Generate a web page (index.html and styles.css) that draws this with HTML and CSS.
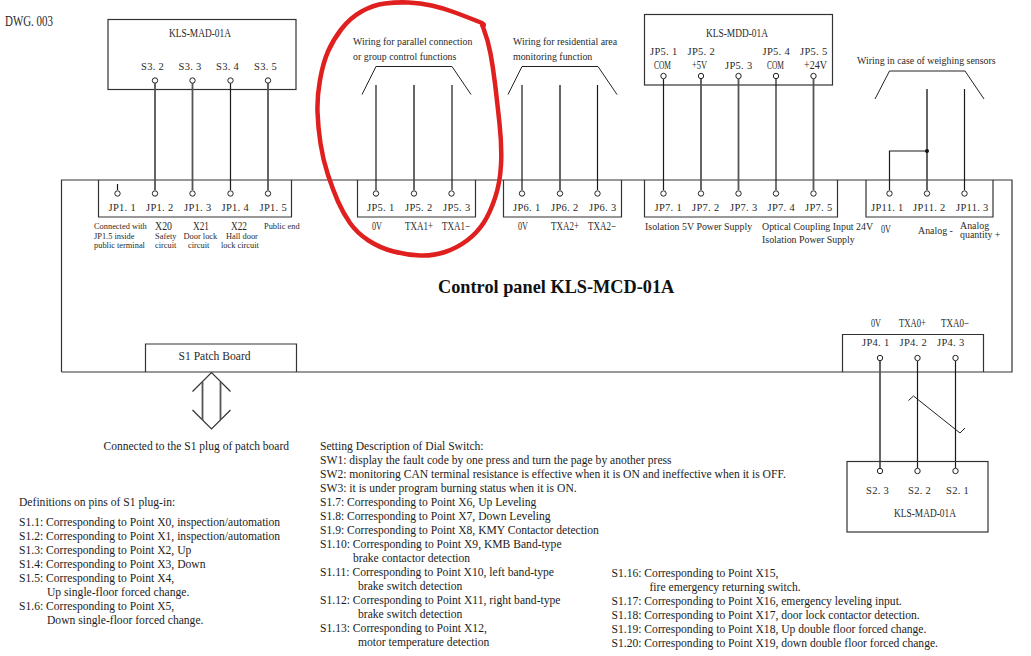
FILE: index.html
```html
<!DOCTYPE html>
<html lang="en">
<head>
  <meta charset="UTF-8">
  <meta name="viewport" content="width=device-width, initial-scale=1.0">
  <title>DWG. 003 - Control panel KLS-MCD-01A</title>
  <link rel="stylesheet" href="styles.css">
</head>
<body>
  <div class="sheet">
    <svg class="drawing" width="1031" height="656" viewBox="0 0 1031 656">
      <text class="dwg" x="5" y="26" textLength="48" lengthAdjust="spacingAndGlyphs">DWG. 003</text>

      <!-- main panel -->
      <path class="box" d="M61.5 372 V180 H1012 V372 H61.5"/>
      <text class="title" x="438" y="293">Control panel KLS-MCD-01A</text>

      <!-- KLS-MAD-01A top -->
      <rect class="box" x="108" y="19.5" width="188" height="70"/>
      <text class="cond" x="169" y="37" textLength="62" lengthAdjust="spacingAndGlyphs">KLS-MAD-01A</text>
      <text class="cad" x="141" y="70">S3. 2</text>
      <text class="cad" x="178.5" y="70">S3. 3</text>
      <text class="cad" x="216" y="70">S3. 4</text>
      <text class="cad" x="254" y="70">S3. 5</text>
      <path class="wire-wide" d="M155 83V190M192.5 83V190M268 83V190"/>
      <path class="wire" d="M230.5 83V190M117.5 184V190"/>
      <circle class="pin" cx="155" cy="80.5" r="2.7"/>
      <circle class="pin" cx="192.5" cy="80.5" r="2.7"/>
      <circle class="pin" cx="230.5" cy="80.5" r="2.7"/>
      <circle class="pin" cx="268" cy="80.5" r="2.7"/>

      <!-- JP1 -->
      <path class="box" d="M98.5 180V217H291.5V180"/>
      <circle class="pin" cx="117.5" cy="193.5" r="2.7"/>
      <circle class="pin" cx="155" cy="193.5" r="2.7"/>
      <circle class="pin" cx="192.5" cy="193.5" r="2.7"/>
      <circle class="pin" cx="230.5" cy="193.5" r="2.7"/>
      <circle class="pin" cx="268" cy="193.5" r="2.7"/>
      <text class="cad" x="108.5" y="210.5">JP1. 1</text>
      <text class="cad" x="146" y="210.5">JP1. 2</text>
      <text class="cad" x="184" y="210.5">JP1. 3</text>
      <text class="cad" x="221.5" y="210.5">JP1. 4</text>
      <text class="cad" x="259.5" y="210.5">JP1. 5</text>
      <text class="tiny" x="94" y="229">Connected with</text>
      <text class="tiny" x="94" y="239">JP1.5 inside</text>
      <text class="tiny" x="94" y="248">public terminal</text>
      <text class="cond" x="155" y="230" textLength="17" lengthAdjust="spacingAndGlyphs">X20</text>
      <text class="tiny" x="155" y="239">Safety</text>
      <text class="tiny" x="155" y="248">circuit</text>
      <text class="cond" x="193" y="230" textLength="16" lengthAdjust="spacingAndGlyphs">X21</text>
      <text class="tiny" x="183.5" y="239">Door lock</text>
      <text class="tiny" x="188" y="248">circuit</text>
      <text class="cond" x="231" y="230" textLength="16" lengthAdjust="spacingAndGlyphs">X22</text>
      <text class="tiny" x="226" y="239">Hall door</text>
      <text class="tiny" x="221" y="248">lock circuit</text>
      <text class="tiny" x="264" y="229">Public end</text>

      <!-- JP5 parallel wiring -->
      <text class="note" x="353" y="45">Wiring for parallel connection</text>
      <text class="note" x="353" y="60">or group control functions</text>
      <path class="thin" d="M362 94.5 376 66.5H452L471 94.5"/>
      <path class="wire" d="M376 85V190M452 85V190"/>
      <path class="wire-wide" d="M414 85V190"/>
      <path class="box" d="M357.5 180V217H475.5V180"/>
      <circle class="pin" cx="376" cy="193.5" r="2.7"/>
      <circle class="pin" cx="414" cy="193.5" r="2.7"/>
      <circle class="pin" cx="451.5" cy="193.5" r="2.7"/>
      <text class="cad" x="367" y="210.5">JP5. 1</text>
      <text class="cad" x="405" y="210.5">JP5. 2</text>
      <text class="cad" x="443" y="210.5">JP5. 3</text>
      <text class="cond" x="372" y="230" textLength="10" lengthAdjust="spacingAndGlyphs">0V</text>
      <text class="cond" x="405" y="230" textLength="28" lengthAdjust="spacingAndGlyphs">TXA1+</text>
      <text class="cond" x="442" y="230" textLength="28" lengthAdjust="spacingAndGlyphs">TXA1−</text>

      <!-- JP6 residential area -->
      <text class="note" x="513" y="45">Wiring for residential area</text>
      <text class="note" x="513" y="60">monitoring function</text>
      <path class="thin" d="M508 94.5 522 66.5H598L617 94.5"/>
      <path class="wire" d="M522 85V190M597.5 85V190"/>
      <path class="wire-wide" d="M560 85V190"/>
      <path class="box" d="M503.5 180V217H621.5V180"/>
      <circle class="pin" cx="522" cy="193.5" r="2.7"/>
      <circle class="pin" cx="560" cy="193.5" r="2.7"/>
      <circle class="pin" cx="597.5" cy="193.5" r="2.7"/>
      <text class="cad" x="513" y="210.5">JP6. 1</text>
      <text class="cad" x="551" y="210.5">JP6. 2</text>
      <text class="cad" x="589" y="210.5">JP6. 3</text>
      <text class="cond" x="518" y="230" textLength="10" lengthAdjust="spacingAndGlyphs">0V</text>
      <text class="cond" x="551" y="230" textLength="28" lengthAdjust="spacingAndGlyphs">TXA2+</text>
      <text class="cond" x="588" y="230" textLength="28" lengthAdjust="spacingAndGlyphs">TXA2−</text>

      <!-- KLS-MDD-01A -->
      <rect class="box" x="644.5" y="14.5" width="188" height="70.5"/>
      <text class="cond" x="706" y="37" textLength="62" lengthAdjust="spacingAndGlyphs">KLS-MDD-01A</text>
      <text class="cad" x="650" y="55">JP5. 1</text>
      <text class="cad" x="687.5" y="55">JP5. 2</text>
      <text class="cad" x="762.5" y="55">JP5. 4</text>
      <text class="cad" x="800" y="55">JP5. 5</text>
      <text class="cond" x="654" y="69" textLength="17" lengthAdjust="spacingAndGlyphs">COM</text>
      <text class="cond" x="692" y="69" textLength="15" lengthAdjust="spacingAndGlyphs">+5V</text>
      <text class="cad" x="725" y="69">JP5. 3</text>
      <text class="cond" x="767" y="69" textLength="17" lengthAdjust="spacingAndGlyphs">COM</text>
      <text class="cond" x="804" y="69" textLength="23" lengthAdjust="spacingAndGlyphs">+24V</text>
      <path class="wire" d="M663.5 79V190M776 79V190"/>
      <path class="wire-wide" d="M701 79V190M738.5 79V190M813.5 79V190"/>
      <circle class="pin" cx="663.5" cy="76" r="2.7"/>
      <circle class="pin" cx="701" cy="76" r="2.7"/>
      <circle class="pin" cx="738.5" cy="76" r="2.7"/>
      <circle class="pin" cx="776" cy="76" r="2.7"/>
      <circle class="pin" cx="813.5" cy="76" r="2.7"/>

      <!-- JP7 -->
      <path class="box" d="M644.5 180V217H837.5V180"/>
      <circle class="pin" cx="663.5" cy="193.5" r="2.7"/>
      <circle class="pin" cx="701" cy="193.5" r="2.7"/>
      <circle class="pin" cx="738.5" cy="193.5" r="2.7"/>
      <circle class="pin" cx="776" cy="193.5" r="2.7"/>
      <circle class="pin" cx="813.5" cy="193.5" r="2.7"/>
      <text class="cad" x="654.5" y="210.5">JP7. 1</text>
      <text class="cad" x="692" y="210.5">JP7. 2</text>
      <text class="cad" x="730" y="210.5">JP7. 3</text>
      <text class="cad" x="767.5" y="210.5">JP7. 4</text>
      <text class="cad" x="805" y="210.5">JP7. 5</text>
      <text class="note" x="645" y="229.5">Isolation 5V Power Supply</text>
      <text class="note" x="762" y="229.5">Optical Coupling Input 24V</text>
      <text class="note" x="762" y="243">Isolation Power Supply</text>

      <!-- JP11 weighing sensors -->
      <text class="note" x="857" y="64">Wiring in case of weighing sensors</text>
      <path class="thin" d="M875 99 889.5 71H965L984 99"/>
      <path class="wire" d="M964.5 89V190M927 151H889.5V190"/>
      <path class="wire-wide" d="M927 89V190"/>
      <circle class="joint" cx="927" cy="151" r="2"/>
      <path class="box" d="M866 180V217H993V180"/>
      <circle class="pin" cx="889.5" cy="193.5" r="2.7"/>
      <circle class="pin" cx="927" cy="193.5" r="2.7"/>
      <circle class="pin" cx="964.5" cy="193.5" r="2.7"/>
      <text class="cad" x="871" y="210.5">JP11. 1</text>
      <text class="cad" x="913" y="210.5">JP11. 2</text>
      <text class="cad" x="956" y="210.5">JP11. 3</text>
      <text class="cond" x="881" y="233" textLength="10" lengthAdjust="spacingAndGlyphs">0V</text>
      <text class="note" x="918" y="234">Analog -</text>
      <text class="note" x="960" y="229">Analog</text>
      <text class="note" x="960" y="238">quantity +</text>

      <!-- JP4 and lower KLS-MAD-01A -->
      <text class="cond" x="871" y="327" textLength="10" lengthAdjust="spacingAndGlyphs">0V</text>
      <text class="cond" x="899" y="327" textLength="27" lengthAdjust="spacingAndGlyphs">TXA0+</text>
      <text class="cond" x="941" y="327" textLength="28" lengthAdjust="spacingAndGlyphs">TXA0−</text>
      <path class="box" d="M842.5 372V334.5H983.5V372"/>
      <text class="cad" x="862" y="346">JP4. 1</text>
      <text class="cad" x="899.5" y="346">JP4. 2</text>
      <text class="cad" x="937" y="346">JP4. 3</text>
      <path class="wire-wide" d="M880 361V468"/>
      <path class="wire" d="M917.5 361V468M955.5 361V468"/>
      <path class="thin" d="M908.5 400.5 913.5 396 960 433 965 428"/>
      <circle class="pin" cx="880" cy="358" r="2.7"/>
      <circle class="pin" cx="917.5" cy="358" r="2.7"/>
      <circle class="pin" cx="955.5" cy="358" r="2.7"/>
      <rect class="box" x="847" y="461.5" width="141" height="70.5"/>
      <circle class="pin" cx="880" cy="471" r="2.7"/>
      <circle class="pin" cx="917.5" cy="471" r="2.7"/>
      <circle class="pin" cx="955.5" cy="471" r="2.7"/>
      <text class="cad" x="866" y="493.5">S2. 3</text>
      <text class="cad" x="908" y="493.5">S2. 2</text>
      <text class="cad" x="946" y="493.5">S2. 1</text>
      <text class="cond" x="894" y="517" textLength="62" lengthAdjust="spacingAndGlyphs">KLS-MAD-01A</text>

      <!-- S1 patch board -->
      <path class="box" d="M145.5 372V344H296.5V372"/>
      <text class="patch" x="178.5" y="359.5">S1 Patch Board</text>
      <path class="box" d="M192.5 391.5 211.5 372.5 230.5 391.5M192.5 410 211.5 429 230.5 410"/>
      <path class="wire-wide" d="M202.5 382V420M220.5 382V420"/>

      <!-- red marker -->
      <path class="marker" d="M482 23Q467 17 455 12.5Q443 8 431.5 5.5Q420 3 408.5 2.5Q397 2 385 3.5Q373 5 361.5 11.5Q350 18 341.5 29Q333 40 328 51.5Q323 63 320 80Q317 97 317.5 112Q318 127 320.5 143.5Q323 160 328 175Q333 190 338 201.5Q343 213 350 223Q357 233 368.5 240.5Q380 248 393.5 251.5Q407 255 420 255.5Q433 256 445 252Q457 248 467 240.5Q477 233 483.5 223Q490 213 495 198Q500 183 501 165Q502 147 499.5 123.5Q497 100 495 83.5Q493 67 490.5 53.5Q488 40 483 27"/>
      <circle class="marker-blob" cx="483" cy="25" r="3"/>
    </svg>

    <p class="caption">Connected to the S1 plug of patch board</p>

    <div class="notes notes-pins">
      <p class="notes-title">Definitions on pins of S1 plug-in:</p>
      <p>S1.1: Corresponding to Point X0, inspection/automation</p>
      <p>S1.2: Corresponding to Point X1, inspection/automation</p>
      <p>S1.3: Corresponding to Point X2, Up</p>
      <p>S1.4: Corresponding to Point X3, Down</p>
      <p>S1.5: Corresponding to Point X4,</p>
      <p class="indent-pins">Up single-floor forced change.</p>
      <p>S1.6: Corresponding to Point X5,</p>
      <p class="indent-pins">Down single-floor forced change.</p>
    </div>

    <div class="notes notes-dial">
      <p>Setting Description of Dial Switch:</p>
      <p>SW1: display the fault code by one press and turn the page by another press</p>
      <p>SW2: monitoring CAN terminal resistance is effective when it is ON and ineffective when it is OFF.</p>
      <p>SW3: it is under program burning status when it is ON.</p>
      <p>S1.7: Corresponding to Point X6, Up Leveling</p>
      <p>S1.8: Corresponding to Point X7, Down Leveling</p>
      <p>S1.9: Corresponding to Point X8, KMY Contactor detection</p>
      <p>S1.10: Corresponding to Point X9, KMB Band-type</p>
      <p class="indent-a">brake contactor detection</p>
      <p>S1.11: Corresponding to Point X10, left band-type</p>
      <p class="indent-b">brake switch detection</p>
      <p>S1.12: Corresponding to Point X11, right band-type</p>
      <p class="indent-b">brake switch detection</p>
      <p>S1.13: Corresponding to Point X12,</p>
      <p class="indent-b">motor temperature detection</p>
    </div>

    <div class="notes notes-fire">
      <p>S1.16: Corresponding to Point X15,</p>
      <p class="indent-c">fire emergency returning switch.</p>
      <p>S1.17: Corresponding to Point X16, emergency leveling input.</p>
      <p>S1.18: Corresponding to Point X17, door lock contactor detection.</p>
      <p>S1.19: Corresponding to Point X18, Up double floor forced change.</p>
      <p>S1.20: Corresponding to Point X19, down double floor forced change.</p>
    </div>
  </div>
</body>
</html>
```
FILE: styles.css
```css
body {
  margin: 0;
  padding: 0;
  background-color: #ffffff;
  font-family: "Liberation Serif", serif;
  color: #1c1c1c;
}

.sheet {
  position: relative;
  width: 1031px;
  height: 656px;
  overflow: hidden;
}

.drawing {
  display: block;
}

/* drawing text */
.drawing text {
  font-family: "Liberation Serif", serif;
  fill: #2a2a2a;
}

.cad {
  font-size: 10.5px;
  letter-spacing: 0.3px;
}

/* squeezed to the width set in textLength */
.cond {
  font-size: 11.5px;
}

.dwg {
  font-size: 14px;
}

.note {
  font-size: 9.9px;
}

.tiny {
  font-size: 8.4px;
}

.patch {
  font-size: 11.6px;
}

.drawing .title {
  font-size: 18.3px;
  font-weight: bold;
  fill: #111111;
}

/* drawing lines */
.box,
.thin,
.wire,
.wire-wide,
.marker {
  fill: none;
}

.box {
  stroke: #333333;
  stroke-width: 1.2;
}

.thin {
  stroke: #222222;
  stroke-width: 1;
}

.wire {
  stroke: #1a1a1a;
  stroke-width: 1.2;
}

.wire-wide {
  stroke: #555555;
  stroke-width: 1.8;
}

.pin {
  fill: #ffffff;
  stroke: #222222;
  stroke-width: 1;
}

.joint {
  fill: #111111;
}

.marker {
  stroke: #e0201f;
  stroke-width: 4.5;
  stroke-linecap: round;
  stroke-linejoin: round;
}

.marker-blob {
  fill: #e0201f;
}

/* text blocks below the panel */
.caption {
  position: absolute;
  left: 103.5px;
  top: 439px;
  margin: 0;
  font-size: 11.5px;
  line-height: 14px;
  white-space: nowrap;
}

.notes {
  position: absolute;
  font-size: 11.6px;
  line-height: 14px;
  white-space: nowrap;
}

.notes p {
  margin: 0;
}

.notes .notes-title {
  margin-bottom: 6px;
}

.notes-pins {
  left: 19px;
  top: 496px;
}

.notes-dial {
  left: 320px;
  top: 440px;
}

.notes-fire {
  left: 611.5px;
  top: 567px;
}

.indent-pins {
  padding-left: 28px;
}

.indent-a {
  padding-left: 33px;
}

.indent-b {
  padding-left: 38px;
}

.indent-c {
  padding-left: 38px;
}
```
